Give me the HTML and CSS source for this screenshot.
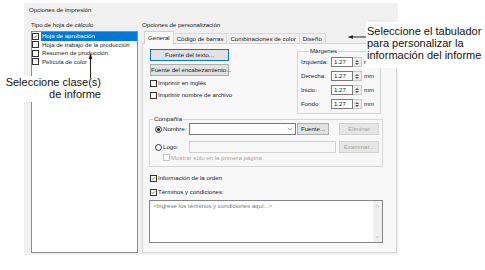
FILE: index.html
```html
<!DOCTYPE html>
<html lang="es">
<head>
  <meta charset="UTF-8">
  <meta name="viewport" content="width=device-width, initial-scale=1.0">
  <title>Opciones de impresión</title>
  <link rel="stylesheet" href="styles.css">
</head>
<body>

<div class="stage">
  <div class="dialog">
    <div class="dialog-title">Opciones de impresión</div>

    <div class="columns">
      <!-- Report types -->
      <div class="sheet-col">
        <div class="caption">Tipo de hoja de cálculo</div>
        <ul class="sheet-list">
          <li class="selected">
            <span class="check"><svg viewBox="0 0 7 7"><path d="M1.2 3.4 L2.7 4.9 L5.8 1.7" fill="none" stroke="#222" stroke-width="0.9"/></svg></span>
            <span class="item-text">Hoja de aprobación</span>
          </li>
          <li><span class="check"></span><span class="item-text">Hoja de trabajo de la producción</span></li>
          <li><span class="check"></span><span class="item-text">Resumen de producción</span></li>
          <li><span class="check"></span><span class="item-text">Película de color</span></li>
        </ul>
      </div>

      <!-- Customisation tabs -->
      <div class="options-col">
        <div class="caption">Opciones de personalización</div>
        <div class="tabs">
          <span class="tab active">General</span>
          <span class="tab">Código de barras</span>
          <span class="tab">Combinaciones de color</span>
          <span class="tab">Diseño</span>
        </div>

        <div class="tab-panel">
          <div class="top-row">
            <div class="font-col">
              <button class="btn btn-wide default">Fuente del texto...</button>
              <button class="btn btn-wide">Fuente del encabezamiento...</button>
              <label class="chk"><span class="check"></span>Imprimir en inglés</label>
              <label class="chk"><span class="check"></span>Imprimir nombre de archivo</label>
            </div>

            <fieldset class="margins">
              <legend>Márgenes</legend>
              <div class="margin-row">
                <span class="m-label">Izquierda:</span>
                <span class="spin-val">1.27</span><span class="spin-btn"></span>
                <span class="unit">mm</span>
              </div>
              <div class="margin-row">
                <span class="m-label">Derecha:</span>
                <span class="spin-val">1.27</span><span class="spin-btn"></span>
                <span class="unit">mm</span>
              </div>
              <div class="margin-row">
                <span class="m-label">Inicio:</span>
                <span class="spin-val">1.27</span><span class="spin-btn"></span>
                <span class="unit">mm</span>
              </div>
              <div class="margin-row">
                <span class="m-label">Fondo:</span>
                <span class="spin-val">1.27</span><span class="spin-btn"></span>
                <span class="unit">mm</span>
              </div>
            </fieldset>
          </div>

          <fieldset class="company">
            <legend>Compañía</legend>
            <div class="co-row">
              <label class="co-label"><span class="radio on"></span>Nombre:</label>
              <div class="combo">
                <svg class="combo-arrow" viewBox="0 0 6 4"><path d="M0.8 0.8 L3 3 L5.2 0.8" fill="none" stroke="#888" stroke-width="0.8"/></svg>
              </div>
              <button class="btn btn-small">Fuente...</button>
              <button class="btn btn-side" disabled>Eliminar</button>
            </div>
            <div class="co-row second">
              <label class="co-label"><span class="radio"></span>Logo:</label>
              <div class="logo-field"></div>
              <button class="btn btn-side" disabled>Examinar...</button>
            </div>
            <label class="chk sub disabled"><span class="check"></span>Mostrar sólo en la primera página</label>
          </fieldset>

          <label class="chk order"><span class="check"><svg viewBox="0 0 7 7"><path d="M1.2 3.4 L2.7 4.9 L5.8 1.7" fill="none" stroke="#222" stroke-width="0.9"/></svg></span>Información de la orden</label>
          <label class="chk terms-chk"><span class="check"><svg viewBox="0 0 7 7"><path d="M1.2 3.4 L2.7 4.9 L5.8 1.7" fill="none" stroke="#222" stroke-width="0.9"/></svg></span>Términos y condiciones:</label>

          <div class="terms">
            <div class="terms-text">&lt;Ingrese los términos y condiciones aquí...&gt;</div>
            <div class="scrollbar">
              <svg viewBox="0 0 6 4"><path d="M0.8 3.2 L3 1 L5.2 3.2" fill="none" stroke="#aaa" stroke-width="0.8"/></svg>
              <svg viewBox="0 0 6 4"><path d="M0.8 0.8 L3 3 L5.2 0.8" fill="none" stroke="#aaa" stroke-width="0.8"/></svg>
            </div>
          </div>
        </div>
      </div>
    </div>
  </div>

  <!-- Callouts -->
  <div class="note note-left">Seleccione clase(s)<br>de informe</div>
  <svg class="arrow arrow-up" viewBox="0 0 9 28">
    <polygon points="4.5,2 2.6,8 6.4,8" fill="#222"/>
    <line x1="4.5" y1="7" x2="4.5" y2="27" stroke="#222" stroke-width="1"/>
  </svg>

  <div class="note note-right">Seleccione el tabulador<br>para personalizar la<br>información del informe</div>
  <svg class="arrow arrow-left" viewBox="0 0 19 6">
    <polygon points="0.5,3 6,1.2 6,4.8" fill="#222"/>
    <line x1="5" y1="3" x2="19" y2="3" stroke="#222" stroke-width="1"/>
  </svg>
</div>

</body>
</html>
```

FILE: styles.css
```css
* {
  box-sizing: border-box;
}

body {
  margin: 0;
  background: #fff;
  font-family: "Liberation Sans", Arial, sans-serif;
}

.stage {
  position: relative;
  width: 485px;
  height: 270px;
  overflow: hidden;
  padding: 3px 0 0 24px;
}

.dialog {
  width: 374px;
  height: 252px;
  background: #f0f0f0;
  font-size: 6.1px;
  line-height: 8px;
  color: #222;
  padding-top: 3px;
}

.dialog-title {
  padding-left: 5px;
}

.columns {
  display: flex;
  gap: 4px;
  margin-top: 7px;
  padding-left: 7px;
}

.caption {
  margin-bottom: 2px;
}

/* list of report types */
.sheet-col {
  width: 107px;
}

.sheet-list {
  list-style: none;
  margin: 0;
  padding: 0;
  height: 222px;
  background: #fff;
  border: 1px solid #8c8c8c;
}

.sheet-list li {
  display: flex;
  align-items: center;
  height: 8.5px;
}

.item-text {
  flex: 1;
  margin-left: 2px;
  padding-left: 1px;
  height: 8.5px;
  line-height: 8.5px;
  white-space: nowrap;
}

.sheet-list li.selected .item-text {
  background: #0078d7;
  color: #fff;
}

.check {
  width: 7px;
  height: 7px;
  flex: none;
  border: 1px solid #333;
  background: #fff;
  display: flex;
}

.check svg {
  width: 5px;
  height: 5px;
}

/* tabs */
.options-col {
  width: 255px;
}

.tabs {
  display: flex;
  align-items: flex-end;
  height: 12px;
  padding-left: 2px;
}

.tab {
  height: 10px;
  padding: 0 3px;
  margin-left: -1px;
  border: 1px solid #d9d9d9;
  border-bottom: none;
  background: #f0f0f0;
  line-height: 9px;
  white-space: nowrap;
}

.tab.active {
  height: 13px;
  margin-bottom: -1px;
  margin-left: 0;
  padding-top: 1px;
  background: #f8f8f9;
  border-color: #cfcfcf;
}

.tab-panel {
  height: 210px;
  border: 1px solid #d4d4d4;
  background: #f8f8f9;
  padding: 5px 13px 0 6px;
}

.top-row {
  display: flex;
  align-items: flex-start;
}

.font-col {
  display: flex;
  flex-direction: column;
  align-items: flex-start;
}

.btn {
  font: inherit;
  color: #222;
  height: 12px;
  padding: 0;
  background: #e1e1e1;
  border: 1px solid #adadad;
  line-height: 10px;
  white-space: nowrap;
}

.btn-wide {
  width: 79px;
  margin-left: 1px;
}

.btn-wide + .btn-wide {
  margin-top: 3px;
}

.btn.default {
  border-color: #0078d7;
}

.btn:disabled {
  background: #e6e6e6;
  border-color: #d2d2d2;
  color: #a6a6a6;
}

.chk {
  display: flex;
  align-items: center;
  gap: 1px;
  height: 10px;
  margin-top: 2px;
  margin-left: 1px;
  white-space: nowrap;
}

.chk.disabled {
  color: #a6a6a6;
}

.chk.disabled .check {
  border-color: #c4c4c4;
}

/* margins group */
fieldset {
  margin: 0;
  min-width: 0;
  border: 1px solid #d6d6d6;
}

legend {
  padding: 0 1px;
  line-height: 8px;
}

.margins {
  width: 84px;
  margin: -2px 2px 0 auto;
  padding: 2px 0 4px 3px;
}

.margins legend {
  margin-left: 8px;
}

.margin-row {
  display: flex;
  align-items: center;
  height: 10px;
  white-space: nowrap;
}

.margin-row + .margin-row {
  margin-top: 4px;
}

.m-label {
  width: 30px;
}

.spin-val {
  width: 22px;
  height: 10px;
  background: #fff;
  border: 1px solid #7a7a7a;
  padding-left: 2px;
  line-height: 8px;
}

.spin-btn {
  width: 9px;
  height: 10px;
  background: #ededed;
  border: 1px solid #c8c8c8;
  border-left: none;
  display: flex;
  flex-direction: column;
  align-items: center;
  justify-content: center;
  gap: 1px;
}

.spin-btn::before,
.spin-btn::after {
  content: "";
  border-left: 2px solid transparent;
  border-right: 2px solid transparent;
}

.spin-btn::before {
  border-bottom: 2px solid #555;
}

.spin-btn::after {
  border-top: 2px solid #555;
}

.unit {
  margin-left: 2px;
}

/* company group */
.company {
  margin-top: 1px;
  padding: 0 3px 4px 5px;
}

.company legend {
  margin-left: -2px;
}

.co-row {
  display: flex;
  align-items: center;
  height: 12px;
}

.co-row.second {
  margin-top: 6px;
}

.co-label {
  width: 34px;
  display: flex;
  align-items: center;
  gap: 1px;
  white-space: nowrap;
}

.radio {
  width: 7px;
  height: 7px;
  flex: none;
  border: 1px solid #333;
  border-radius: 50%;
  background: #fff;
  display: flex;
  align-items: center;
  justify-content: center;
}

.radio.on::after {
  content: "";
  width: 3px;
  height: 3px;
  border-radius: 50%;
  background: #111;
}

.combo {
  width: 107px;
  height: 12px;
  background: #fff;
  border: 1px solid #7a7a7a;
  display: flex;
  align-items: center;
  justify-content: flex-end;
  padding-right: 2px;
}

.combo-arrow {
  width: 6px;
  height: 4px;
}

.btn-small {
  width: 32px;
  margin-left: 1px;
}

.btn-side {
  width: 40px;
  margin-left: auto;
}

.logo-field {
  width: 147px;
  height: 12px;
  background: #f8f8f9;
  border: 1px solid #d0d0d0;
}

.chk.sub {
  height: 9px;
  margin-top: 0;
  margin-left: 8px;
}

.chk.order {
  margin-top: 6px;
}

.chk.terms-chk {
  margin-top: 4px;
}

/* terms box */
.terms {
  display: flex;
  height: 43px;
  margin-top: 3px;
  background: #fff;
  border: 1px solid #858585;
}

.terms-text {
  flex: 1;
  padding: 1px 3px;
  color: #777;
}

.scrollbar {
  width: 9px;
  background: #f0f0f0;
  display: flex;
  flex-direction: column;
  justify-content: space-between;
  align-items: center;
  padding: 3px 0;
}

.scrollbar svg {
  width: 5px;
  height: 4px;
}

/* callouts */
.note {
  position: absolute;
  background: #fff;
  font-size: 11px;
  line-height: 12px;
  color: #111;
  white-space: nowrap;
}

.note-left {
  left: 5px;
  top: 76px;
  width: 97px;
  height: 26px;
  text-align: right;
  padding-right: 1px;
}

.note-right {
  left: 366px;
  top: 22px;
  width: 119px;
  height: 46px;
  padding: 3px 0 0 1px;
}

.arrow {
  position: absolute;
}

.arrow-up {
  left: 86px;
  top: 51px;
  width: 9px;
  height: 28px;
}

.arrow-left {
  left: 347px;
  top: 34px;
  width: 19px;
  height: 6px;
}
```
